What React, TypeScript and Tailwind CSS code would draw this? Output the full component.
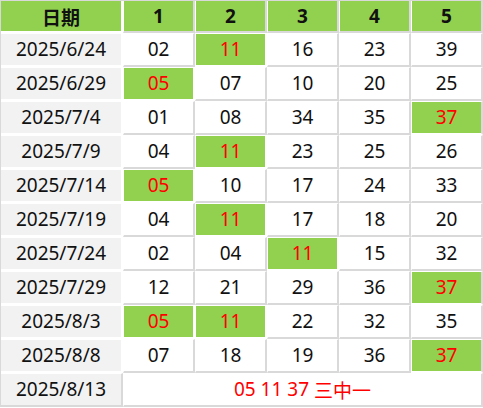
import React from "react";

const rows: { date: string; nums: string[] }[] = [
  { date: "2025/6/24", nums: ["02", "11", "16", "23", "39"] },
  { date: "2025/6/29", nums: ["05", "07", "10", "20", "25"] },
  { date: "2025/7/4", nums: ["01", "08", "34", "35", "37"] },
  { date: "2025/7/9", nums: ["04", "11", "23", "25", "26"] },
  { date: "2025/7/14", nums: ["05", "10", "17", "24", "33"] },
  { date: "2025/7/19", nums: ["04", "11", "17", "18", "20"] },
  { date: "2025/7/24", nums: ["02", "04", "11", "15", "32"] },
  { date: "2025/7/29", nums: ["12", "21", "29", "36", "37"] },
  { date: "2025/8/3", nums: ["05", "11", "22", "32", "35"] },
  { date: "2025/8/8", nums: ["07", "18", "19", "36", "37"] },
];

const hot = new Set(["05", "11", "37"]);

export default function App() {
  return (
    <div
      className="w-[483px] h-[408px] bg-white"
      style={{ fontFamily: '"Noto Sans", "Open Sans", "Noto Sans CJK SC", sans-serif' }}
    >
      <div className="grid grid-cols-[122px_repeat(5,72px)] border-l border-t border-[#d9d9d9] w-[483px] text-[19px] leading-none text-[#111]">
        <div className="h-[32px] bg-[#92d050] border-r-2 border-b-2 border-white flex items-center justify-center font-bold" style={{ fontFamily: '"Noto Sans CJK SC", sans-serif' }}>
          日期
        </div>
        {["1", "2", "3", "4", "5"].map((h) => (
          <div
            key={h}
            className="h-[32px] bg-[#92d050] border-l border-white border-r-2 border-b-2 border-r-[#d9d9d9] border-b-[#d9d9d9] flex items-center justify-center font-bold"
          >
            {h}
          </div>
        ))}
        {rows.map((r) => (
          <React.Fragment key={r.date}>
            <div className="h-[34px] bg-[#f2f2f2] border-t border-r-2 border-b-2 border-white flex items-center justify-center">
              {r.date}
            </div>
            {r.nums.map((n, i) => {
              const isHot = hot.has(n);
              return isHot ? (
                <div
                  key={i}
                  className={`h-[34px] bg-[#92d050] text-[#ff0000] border-t border-l border-r-2 border-b-2 border-white flex items-center justify-center ${i === 4 ? "border-r-[#d9d9d9]" : ""}`}
                >
                  {n}
                </div>
              ) : (
                <div
                  key={i}
                  className="h-[34px] bg-white border-t border-l border-white border-r-2 border-b-2 border-r-[#d9d9d9] border-b-[#d9d9d9] flex items-center justify-center"
                >
                  {n}
                </div>
              );
            })}
          </React.Fragment>
        ))}
        <div className="h-[34px] bg-[#f2f2f2] border-t border-white border-r-2 border-b-2 border-r-[#d9d9d9] border-b-[#d9d9d9] flex items-center justify-center">
          2025/8/13
        </div>
        <div className="col-span-5 h-[34px] bg-white border-t border-l border-white border-r-2 border-b-2 border-r-[#d9d9d9] border-b-[#d9d9d9] flex items-center justify-center text-[#ff0000]">
          <span>05 11 37 </span>
          <span className="ml-[5px]" style={{ fontFamily: '"Noto Sans CJK SC", sans-serif' }}>三中一</span>
        </div>
      </div>
    </div>
  );
}
